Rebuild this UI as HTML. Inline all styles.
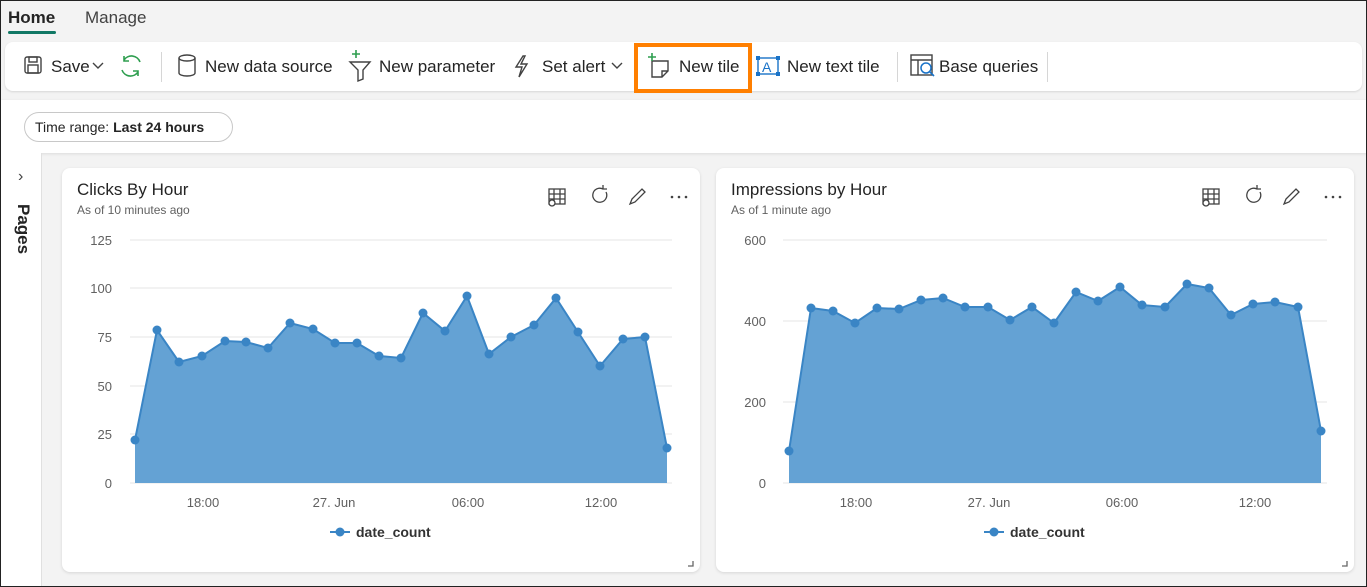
<!DOCTYPE html>
<html><head><meta charset="utf-8"><style>
*{box-sizing:border-box;margin:0;padding:0}
body{width:1367px;height:587px;overflow:hidden;background:#f3f3f3;font-family:"Liberation Sans",sans-serif;color:#242424;position:relative}
.frame{position:absolute;inset:0;border:1px solid #222;pointer-events:none;z-index:9}
.abs{position:absolute}
.tb{left:5px;top:42px;width:1357px;height:49px;background:#fff;border-radius:8px;box-shadow:0 1px 2px rgba(0,0,0,.12)}
.ti{position:absolute;top:57px;font-size:17px;color:#242424;white-space:nowrap}
.sep{position:absolute;top:52px;width:1px;height:30px;background:#d6d6d6}
.card{background:#fff;border-radius:8px;box-shadow:0 1px 3px rgba(0,0,0,.12)}
</style></head><body>
<div class="frame"></div>
<div class="abs" style="left:8px;top:8px;font-size:17px;font-weight:bold">Home</div>
<div class="abs" style="left:8px;top:31px;width:48px;height:3px;background:#117865;border-radius:2px"></div>
<div class="abs" style="left:85px;top:8px;font-size:17px;color:#424242">Manage</div>
<div class="abs tb"></div>
<svg class="abs" style="left:0;top:40px" width="1367" height="55">
<g fill="none" stroke="#424242" stroke-width="1.4">
<rect x="25" y="17" width="16" height="16" rx="2"/><rect x="29" y="17" width="8" height="5"/><rect x="28" y="25" width="10" height="8"/>
<path d="M93 23l5 5 5-5"/>
<ellipse cx="187" cy="18" rx="8" ry="3"/><path d="M179 18v15a8 3 0 0 0 16 0V18"/>
<path d="M350 22h20l-7 8v9l-5 2V30z"/>
<path d="M523 16l-7 11h6l-3 10 8-13h-6l4-8z"/>
<path d="M612 23l5 5 5-5"/>
<path d="M652 21v16h10l6-6V21z M662 37v-6h6"/>
<rect x="758" y="18" width="20" height="16" stroke="#1a73c8"/>
<rect x="911" y="15" width="21" height="20"/><path d="M911 20h21M918 20v15"/>
</g>
<g fill="none" stroke="#2e9e4f" stroke-width="1.6">
<path d="M140 22a9 9 0 0 0-16-2M124 16v5h5M122 30a9 9 0 0 0 16 2M138 36v-5h-5"/>
<path d="M352 14h8M356 10v8M648 17h8M652 13v8"/>
</g>
<text x="762" y="32" font-size="14" fill="#1a73c8" font-family="Liberation Sans">A</text>
<g fill="#1a73c8"><rect x="756" y="16" width="4" height="4"/><rect x="776" y="16" width="4" height="4"/><rect x="756" y="32" width="4" height="4"/><rect x="776" y="32" width="4" height="4"/></g>
<circle cx="926" cy="28" r="5" fill="#fff" stroke="#1a73c8" stroke-width="1.5"/><path d="M930 32l4 4" stroke="#1a73c8" stroke-width="1.6"/>
</svg>
<div class="ti" style="left:51px">Save</div>
<div class="sep" style="left:161px"></div>
<div class="ti" style="left:205px">New data source</div>
<div class="ti" style="left:379px">New parameter</div>
<div class="ti" style="left:542px">Set alert</div>
<div class="ti" style="left:679px">New tile</div>
<div class="ti" style="left:787px">New text tile</div>
<div class="sep" style="left:897px"></div>
<div class="ti" style="left:939px">Base queries</div>
<div class="sep" style="left:1047px"></div>
<div class="abs" style="left:634px;top:43px;width:118px;height:50px;border:4px solid #ff7f00"></div>
<div class="abs" style="left:0;top:100px;width:1367px;height:53px;background:#fff;box-shadow:0 1px 3px rgba(0,0,0,.1)"></div>
<div class="abs" style="left:24px;top:112px;width:209px;height:30px;border:1px solid #c8c8c8;border-radius:15px;font-size:14px;padding:6px 10px;white-space:nowrap">Time range: <b>Last 24 hours</b></div>
<div class="abs" style="left:0;top:153px;width:42px;height:434px;background:#fff;border-right:1px solid #e0e0e0"></div>
<div class="abs" style="left:18px;top:168px;font-size:16px;color:#424242">›</div>
<div class="abs" style="left:9px;top:204px;font-size:17px;font-weight:bold;transform-origin:0 0;transform:translate(24px,0) rotate(90deg)">Pages</div>
<div class="abs card" style="left:62px;top:168px;width:638px;height:404px"></div>
<div class="abs card" style="left:716px;top:168px;width:638px;height:404px"></div>
<div class="abs" style="left:77px;top:180px;font-size:17px">Clicks By Hour</div>
<div class="abs" style="left:77px;top:203px;font-size:12px;color:#616161">As of 10 minutes ago</div>
<div class="abs" style="left:731px;top:180px;font-size:17px">Impressions by Hour</div>
<div class="abs" style="left:731px;top:203px;font-size:12px;color:#616161">As of 1 minute ago</div>
<svg class="abs" style="left:0;top:0" width="1367" height="587" font-family="Liberation Sans">
<g fill="none" stroke="#424242" stroke-width="1.3">
<g><rect x="549" y="189" width="16" height="15"/><path d="M549 194h16M549 199h16M554 189v15M560 189v15"/><circle cx="552" cy="203" r="3" fill="#fff"/><path d="M606 192a7 7 0 1 1-3-3M603 185v4h4"/><path d="M630 204l2-5 10-10 3 3-10 10z"/></g>
<g transform="translate(654 0)"><rect x="549" y="189" width="16" height="15"/><path d="M549 194h16M549 199h16M554 189v15M560 189v15"/><circle cx="552" cy="203" r="3" fill="#fff"/><path d="M606 192a7 7 0 1 1-3-3M603 185v4h4"/><path d="M630 204l2-5 10-10 3 3-10 10z"/></g>
<path d="M688 566h5v-5M1342 566h5v-5" stroke="#666"/>
</g>
<g fill="#424242"><circle cx="672" cy="197" r="1.3"/><circle cx="679" cy="197" r="1.3"/><circle cx="686" cy="197" r="1.3"/><circle cx="1326" cy="197" r="1.3"/><circle cx="1333" cy="197" r="1.3"/><circle cx="1340" cy="197" r="1.3"/></g>
<g stroke="#e6e6e6"><path d="M130 240H672M130 288H672M130 337H672M130 386H672M130 434H672M130 483H672"/><path d="M783 240H1327M783 321H1327M783 402H1327M783 483H1327"/></g>
<g font-size="13" fill="#616161" text-anchor="end"><text x="112" y="245">125</text><text x="112" y="293">100</text><text x="112" y="342">75</text><text x="112" y="391">50</text><text x="112" y="439">25</text><text x="112" y="488">0</text>
<text x="766" y="245">600</text><text x="766" y="326">400</text><text x="766" y="407">200</text><text x="766" y="488">0</text></g>
<g font-size="13" fill="#616161" text-anchor="middle"><text x="203" y="507">18:00</text><text x="334" y="507">27. Jun</text><text x="468" y="507">06:00</text><text x="601" y="507">12:00</text>
<text x="856" y="507">18:00</text><text x="989" y="507">27. Jun</text><text x="1122" y="507">06:00</text><text x="1255" y="507">12:00</text></g>
<path fill="#64a2d4" d="M135 483L135 440L157 330L179 362L202 356L225 341L246 342L268 348L290 323L313 329L335 343L357 343L379 356L401 358L423 313L445 331L467 296L489 354L511 337L534 325L556 298L578 332L600 366L623 339L645 337L667 448L667 483Z"/>
<polyline fill="none" stroke="#3a85c5" stroke-width="2" points="135,440 157,330 179,362 202,356 225,341 246,342 268,348 290,323 313,329 335,343 357,343 379,356 401,358 423,313 445,331 467,296 489,354 511,337 534,325 556,298 578,332 600,366 623,339 645,337 667,448"/>
<path fill="#64a2d4" d="M789 483L789 451L811 308L833 311L855 323L877 308L899 309L921 300L943 298L965 307L988 307L1010 320L1032 307L1054 323L1076 292L1098 301L1120 287L1142 305L1165 307L1187 284L1209 288L1231 315L1253 304L1275 302L1298 307L1321 431L1321 483Z"/>
<polyline fill="none" stroke="#3a85c5" stroke-width="2" points="789,451 811,308 833,311 855,323 877,308 899,309 921,300 943,298 965,307 988,307 1010,320 1032,307 1054,323 1076,292 1098,301 1120,287 1142,305 1165,307 1187,284 1209,288 1231,315 1253,304 1275,302 1298,307 1321,431"/>
<g fill="#3a85c5">
<circle cx="135" cy="440" r="4.5"/><circle cx="157" cy="330" r="4.5"/><circle cx="179" cy="362" r="4.5"/><circle cx="202" cy="356" r="4.5"/><circle cx="225" cy="341" r="4.5"/><circle cx="246" cy="342" r="4.5"/><circle cx="268" cy="348" r="4.5"/><circle cx="290" cy="323" r="4.5"/><circle cx="313" cy="329" r="4.5"/><circle cx="335" cy="343" r="4.5"/><circle cx="357" cy="343" r="4.5"/><circle cx="379" cy="356" r="4.5"/><circle cx="401" cy="358" r="4.5"/><circle cx="423" cy="313" r="4.5"/><circle cx="445" cy="331" r="4.5"/><circle cx="467" cy="296" r="4.5"/><circle cx="489" cy="354" r="4.5"/><circle cx="511" cy="337" r="4.5"/><circle cx="534" cy="325" r="4.5"/><circle cx="556" cy="298" r="4.5"/><circle cx="578" cy="332" r="4.5"/><circle cx="600" cy="366" r="4.5"/><circle cx="623" cy="339" r="4.5"/><circle cx="645" cy="337" r="4.5"/><circle cx="667" cy="448" r="4.5"/>
<circle cx="789" cy="451" r="4.5"/><circle cx="811" cy="308" r="4.5"/><circle cx="833" cy="311" r="4.5"/><circle cx="855" cy="323" r="4.5"/><circle cx="877" cy="308" r="4.5"/><circle cx="899" cy="309" r="4.5"/><circle cx="921" cy="300" r="4.5"/><circle cx="943" cy="298" r="4.5"/><circle cx="965" cy="307" r="4.5"/><circle cx="988" cy="307" r="4.5"/><circle cx="1010" cy="320" r="4.5"/><circle cx="1032" cy="307" r="4.5"/><circle cx="1054" cy="323" r="4.5"/><circle cx="1076" cy="292" r="4.5"/><circle cx="1098" cy="301" r="4.5"/><circle cx="1120" cy="287" r="4.5"/><circle cx="1142" cy="305" r="4.5"/><circle cx="1165" cy="307" r="4.5"/><circle cx="1187" cy="284" r="4.5"/><circle cx="1209" cy="288" r="4.5"/><circle cx="1231" cy="315" r="4.5"/><circle cx="1253" cy="304" r="4.5"/><circle cx="1275" cy="302" r="4.5"/><circle cx="1298" cy="307" r="4.5"/><circle cx="1321" cy="431" r="4.5"/>
<circle cx="340" cy="532" r="4.5"/><circle cx="994" cy="532" r="4.5"/></g>
<path d="M330 532h20M984 532h20" stroke="#3a85c5" stroke-width="2"/>
<g font-size="14" font-weight="bold" fill="#333"><text x="356" y="537">date_count</text><text x="1010" y="537">date_count</text></g>
</svg>
</body></html>
